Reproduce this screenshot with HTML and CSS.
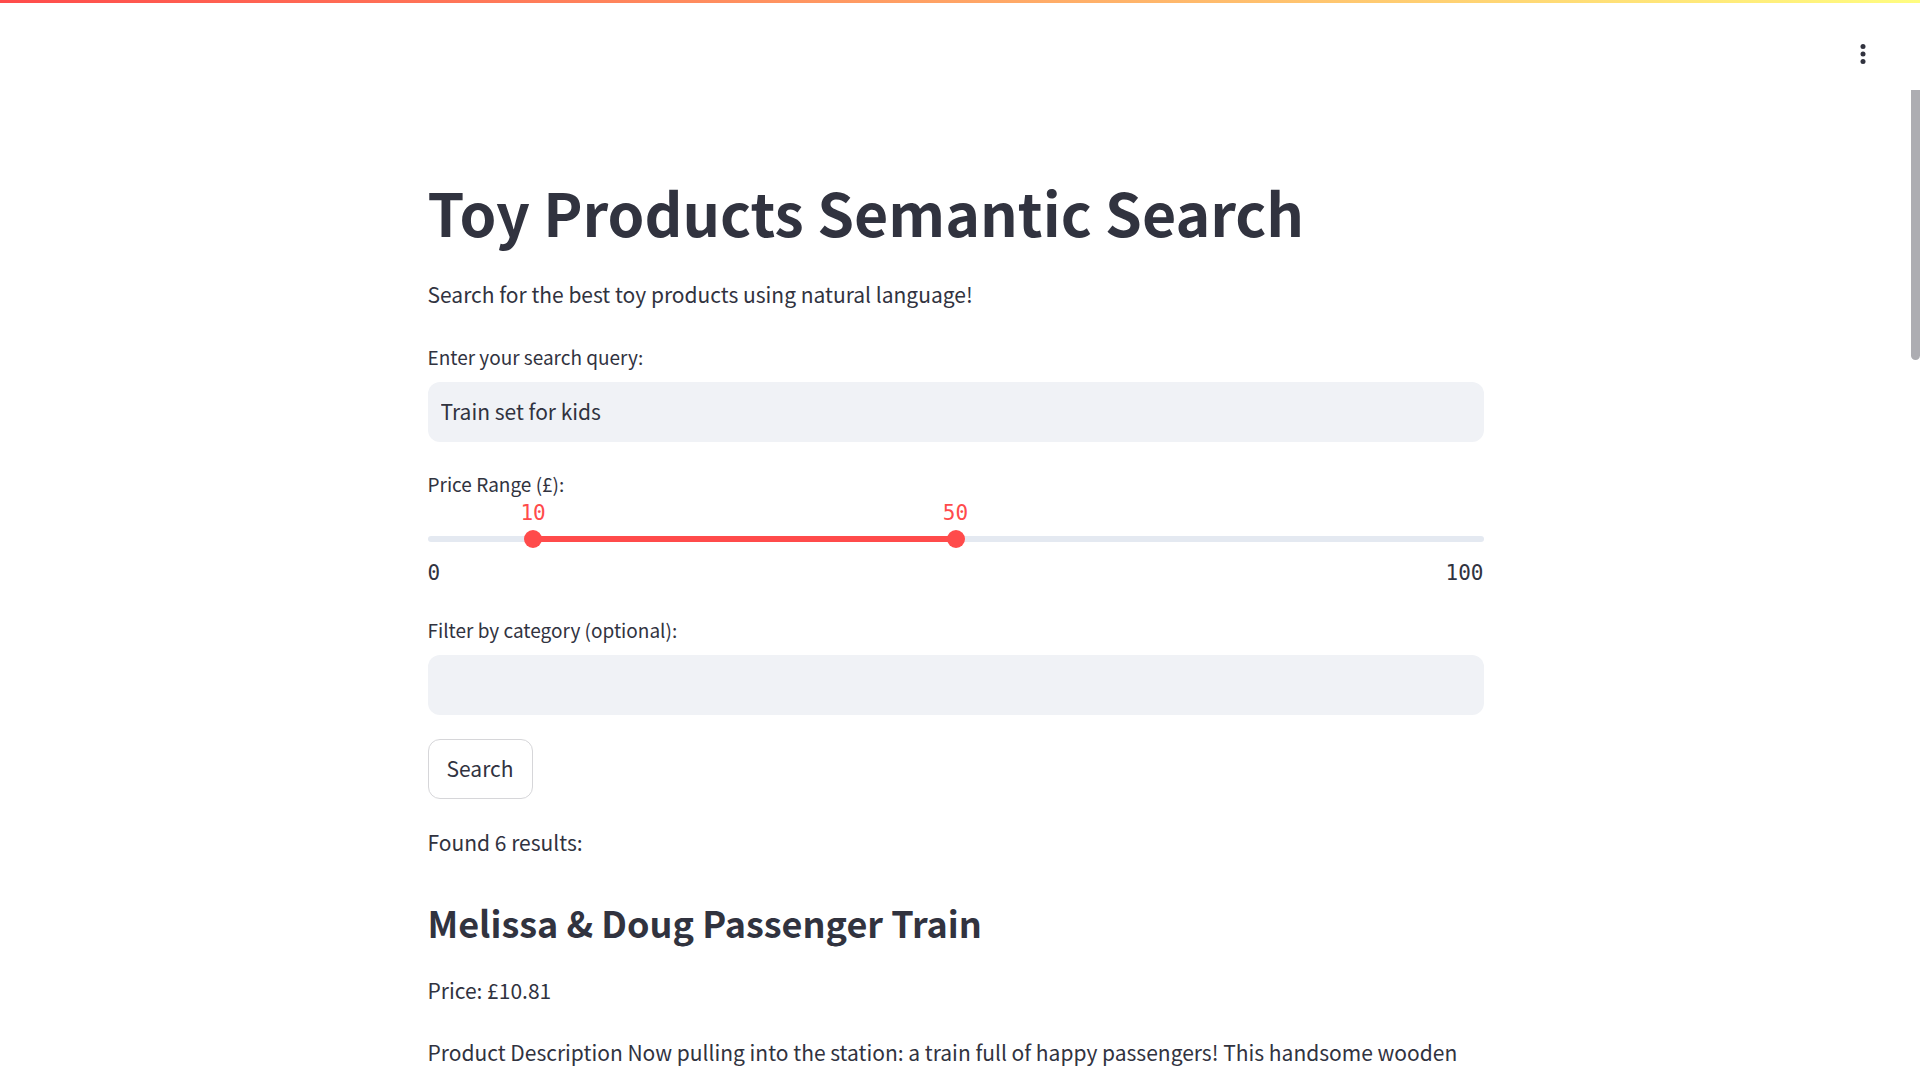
FILE: index.html
```html
<!DOCTYPE html>
<html lang="en">
<head>
<meta charset="utf-8">
<meta name="viewport" content="width=device-width, initial-scale=1">
<title>Toy Products Semantic Search</title>
<link rel="stylesheet" href="styles.css">
</head>
<body>
<div class="app">
  <header class="header">
    <button class="menu-button" type="button" aria-label="Main menu">
      <svg viewBox="0 0 24 24" width="30" height="30" aria-hidden="true">
        <circle cx="12" cy="6" r="2"/><circle cx="12" cy="12" r="2"/><circle cx="12" cy="18" r="2"/>
      </svg>
    </button>
  </header>
  <main class="main">
    <div class="block">
      <div class="intro">
        <h1 class="title">Toy Products Semantic Search</h1>
        <p class="text">Search for the best toy products using natural language!</p>
      </div>
      <div class="field">
        <label class="label" for="query">Enter your search query:</label>
        <input class="input" id="query" type="text" value="Train set for kids">
      </div>
      <div class="field" role="group" aria-labelledby="price-label">
        <label class="label" id="price-label" for="price-min">Price Range (£):</label>
        <div class="slider">
          <output class="value" for="price-min" style="left: 10%">10</output>
          <output class="value" for="price-max" style="left: 50%">50</output>
          <div class="track"><div class="fill" style="margin-left: 10%; width: 40%"></div></div>
          <input class="range" id="price-min" type="range" min="0" max="100" value="10">
          <input class="range" id="price-max" type="range" min="0" max="100" value="50" aria-label="Maximum price">
        </div>
        <div class="ticks"><span>0</span><span>100</span></div>
      </div>
      <div class="field">
        <label class="label" for="category">Filter by category (optional):</label>
        <input class="input" id="category" type="text">
      </div>
      <button class="button" type="button">Search</button>
      <p class="text">Found 6 results:</p>
      <h3 class="subtitle">Melissa &amp; Doug Passenger Train</h3>
      <p class="text">Price: £10.81</p>
      <p class="text">Product Description Now pulling into the station: a train full of happy passengers! This handsome wooden</p>
    </div>
  </main>
  <div class="scroll-thumb"></div>
</div>
</body>
</html>
```
FILE: styles.css
```css
* {
  box-sizing: border-box;
}

body {
  margin: 0;
  background: #fff;
  color: #31333f;
  font-family: "Noto Sans CJK SC", "Noto Sans", sans-serif;
  font-size: 21px;
  line-height: 38px;
}

.app {
  position: relative;
  height: 100vh;
  overflow: hidden;
}

.header {
  display: flex;
  align-items: center;
  justify-content: flex-end;
  height: 90px;
  padding: 14px 42px 0 0;
  border-top: 3px solid;
  border-image: linear-gradient(90deg, #ff4b4b, #fffd80) 1;
}

.menu-button {
  display: flex;
  padding: 0;
  border: 0;
  background: none;
  fill: #31333f;
}

.main {
  padding: 82px 9px 0 0;
}

.block,
.intro {
  display: flex;
  flex-direction: column;
  gap: 24px;
}

.block {
  max-width: 1056px;
  margin: 0 auto;
}

.intro {
  padding-bottom: 2px;
}

.title,
.subtitle,
.text {
  margin: 0;
}

.title {
  font-size: 59px;
  font-weight: 700;
  line-height: 79px;
}

.subtitle {
  padding: 12px 0 0;
  font-size: 36px;
  font-weight: 600;
  line-height: 50px;
}

.field {
  display: flex;
  flex-direction: column;
}

.label {
  height: 43px;
  font-size: 19px;
  line-height: 36px;
}

.input {
  width: 100%;
  height: 60px;
  padding: 0 13px 2px;
  border: 0;
  border-radius: 12px;
  background: #f0f2f6;
  color: inherit;
  font: inherit;
}

.slider {
  position: relative;
  height: 40px;
  padding-top: 27px;
}

.track {
  height: 6px;
  border-radius: 3px;
  background: #e4e9f1;
}

.fill {
  height: 6px;
  background: #ff4b4b;
}

.value,
.ticks {
  font-family: "DejaVu Sans Mono", monospace;
  font-size: 21px;
  line-height: 32px;
}

.value {
  position: absolute;
  top: -12px;
  color: #ff4b4b;
  transform: translateX(-50%);
}

.range {
  position: absolute;
  top: 21px;
  left: -9px;
  width: calc(100% + 18px);
  height: 18px;
  margin: 0;
  background: none;
  appearance: none;
  pointer-events: none;
}

.range::-webkit-slider-thumb {
  width: 18px;
  height: 18px;
  border-radius: 50%;
  background: #ff4b4b;
  appearance: none;
  pointer-events: auto;
}

.ticks {
  display: flex;
  justify-content: space-between;
  height: 39px;
  padding-top: 8px;
}

.button {
  align-self: flex-start;
  height: 60px;
  padding: 0 18px 2px;
  border: 1px solid #d6d6d9;
  border-radius: 12px;
  background: #fff;
  color: inherit;
  font: inherit;
}

.scroll-thumb {
  position: absolute;
  top: 90px;
  right: 0;
  width: 9px;
  height: 25%;
  border-radius: 0 0 5px 5px;
  background: #adadb2;
}
```
